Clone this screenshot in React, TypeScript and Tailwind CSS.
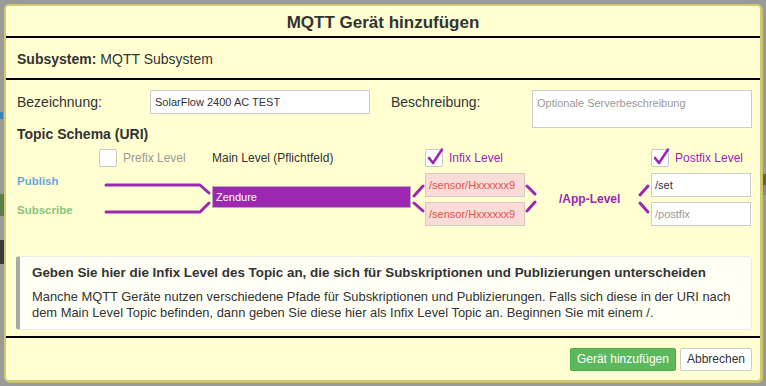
import React from "react";

const PURPLE = "#9c27b0";

function Check({ checked }: { checked?: boolean }) {
  return (
    <div className="relative w-[18px] h-[18px] shrink-0 bg-white border border-[#c8c8c8] rounded-[2px]">
      {checked && (
        <svg className="absolute -left-[1px] -top-[3px]" width="20" height="20" viewBox="0 0 20 20">
          <path d="M4 11 L8 16 L17 2.5" fill="none" stroke={PURPLE} strokeWidth="2.6" strokeLinecap="round" strokeLinejoin="round" />
        </svg>
      )}
    </div>
  );
}

function Line({ d }: { d: string }) {
  return <path d={d} fill="none" stroke={PURPLE} strokeWidth="3" strokeLinecap="round" strokeLinejoin="round" />;
}

export default function App() {
  return (
    <div className="relative w-[766px] h-[386px] overflow-hidden bg-[#9a9a9a] p-[4px] font-['Liberation_Sans',Arial,sans-serif] text-[#333]">
      {/* bits of the page behind the dialog */}
      <div className="absolute left-0 top-[112px] w-[3px] h-[7px] bg-[#3d7fc0]" />
      <div className="absolute left-0 top-[194px] w-[4px] h-[22px] bg-[#5e7c4c]" />
      <div className="absolute left-0 top-[240px] w-[4px] h-[24px] bg-[#3a3a3a]" />
      <div className="absolute right-0 top-[174px] w-[4px] h-[11px] bg-[#5b6448]" />
      <div className="absolute right-0 top-[185px] w-[4px] h-[10px] bg-[#7f8a95]" />

      <div className="relative h-full flex flex-col rounded-[5px] border-2 border-[#d1ca6d] bg-[#ffffd2] shadow-[1px_1px_0_#c9c265]">
        {/* header */}
        <div className="h-[32px] shrink-0 flex items-center justify-center pt-[3px] border-b-2 border-black">
          <h1 className="text-[17px] font-bold leading-none">MQTT Gerät hinzufügen</h1>
        </div>

        <div className="h-[42px] shrink-0 flex items-center pl-[11px] pt-[2px] border-b-2 border-black text-[14px]">
          <span className="font-bold">Subsystem:</span>
          <span className="ml-[4px]">MQTT Subsystem</span>
        </div>

        {/* body */}
        <div className="flex-1 pl-[11px] pr-[8px] pt-[10px]">
          <div className="flex items-start">
            <label className="w-[133px] h-[24px] flex items-center text-[14px]">Bezeichnung:</label>
            <div className="w-[220px] h-[24px] flex items-center bg-white border border-[#cccccc] pl-[4px] text-[11px]">
              SolarFlow 2400 AC TEST
            </div>
            <label className="ml-[21px] w-[141px] h-[24px] flex items-center text-[14px]">Beschreibung:</label>
            <div className="w-[220px] h-[38px] bg-white border border-[#cccccc] pl-[4px] pt-[4px] text-[11px] text-[#999]">
              Optionale Serverbeschreibung
            </div>
          </div>

          <h2 className="text-[14px] font-bold leading-[12px]">Topic Schema (URI)</h2>

          <div className="mt-[9px] grid grid-cols-[82px_113px_199px_14px_100px_126px_100px] grid-rows-[18px_53px] gap-y-[6px] text-[12px]">
            {/* checkbox row */}
            <div />
            <div className="flex items-center">
              <Check />
              <span className="ml-[6px] text-[#999]">Prefix Level</span>
            </div>
            <div className="flex items-center">Main Level (Pflichtfeld)</div>
            <div />
            <div className="flex items-center">
              <Check checked />
              <span className="ml-[6px] text-[#9c27b0]">Infix Level</span>
            </div>
            <div />
            <div className="flex items-center">
              <Check checked />
              <span className="ml-[6px] text-[#9c27b0]">Postfix Level</span>
            </div>

            {/* topic diagram row */}
            <div className="flex flex-col font-bold text-[11.5px] leading-[16px]">
              <span className="text-[#6aa6dd]">Publish</span>
              <span className="mt-[13px] text-[#88c47a]">Subscribe</span>
            </div>
            <svg width="113" height="53" viewBox="0 0 113 53">
              <Line d="M7 12 H101 L110 20" />
              <Line d="M7 39 H101 L110 30" />
            </svg>
            <div className="mt-[13px] h-[22px] flex items-center bg-[#9c27b0] border border-[#c2a3c8] pl-[3px] text-[11px] text-white">
              Zendure
            </div>
            <svg width="14" height="53" viewBox="0 0 14 53">
              <Line d="M3 23 L12 13" />
              <Line d="M3 30 L12 38" />
            </svg>
            <div className="flex flex-col gap-[5px] text-[11px]">
              <div className="h-[24px] flex items-center bg-[#f9dcd8] border border-[#d9c8c2] pl-[3px] text-[#e0514f]">/sensor/Hxxxxxx9</div>
              <div className="h-[24px] flex items-center bg-[#f9dcd8] border border-[#d9c8c2] pl-[3px] text-[#e0514f]">/sensor/Hxxxxxx9</div>
            </div>
            <div className="relative flex items-center pl-[34px] pb-[2px] font-bold text-[12px] text-[#9c27b0]">
              <svg className="absolute inset-0" width="126" height="53" viewBox="0 0 126 53">
                <Line d="M2 13 L10 21" />
                <Line d="M2 38 L10 29" />
                <Line d="M115 22 L123 13" />
                <Line d="M115 30 L123 39" />
              </svg>
              /App-Level
            </div>
            <div className="flex flex-col gap-[5px] text-[11px]">
              <div className="h-[24px] flex items-center bg-white border border-[#cccccc] pl-[3px]">/set</div>
              <div className="h-[24px] flex items-center bg-white border border-[#cccccc] pl-[3px] text-[#999]">/postfix</div>
            </div>
          </div>

          {/* info box */}
          <div className="mt-[30px] -ml-[1px] h-[74px] rounded-[3px] border border-[#ebebeb] border-l-4 border-l-[#a8a8a8] bg-[#fffff6] pl-[12px] pt-[8px]">
            <p className="text-[13.4px] font-bold leading-[16px]">
              Geben Sie hier die Infix Level des Topic an, die sich für Subskriptionen und Publizierungen unterscheiden
            </p>
            <p className="mt-[8px] text-[12.9px] leading-[16px]">
              Manche MQTT Geräte nutzen verschiedene Pfade für Subskriptionen und Publizierungen. Falls sich diese in der URI nach
              <br />
              dem Main Level Topic befinden, dann geben Sie diese hier als Infix Level Topic an. Beginnen Sie mit einem /.
            </p>
          </div>
        </div>

        {/* footer */}
        <div className="h-[44px] shrink-0 flex items-center justify-end gap-[4px] pr-[8px] border-t-2 border-black text-[12px]">
          <button className="h-[23px] px-[6px] rounded-[2px] bg-[#5cb85c] border border-[#4cae4c] text-white">Gerät hinzufügen</button>
          <button className="h-[23px] px-[6px] rounded-[2px] bg-white border border-[#cccccc] text-[#333]">Abbrechen</button>
        </div>
      </div>
    </div>
  );
}
